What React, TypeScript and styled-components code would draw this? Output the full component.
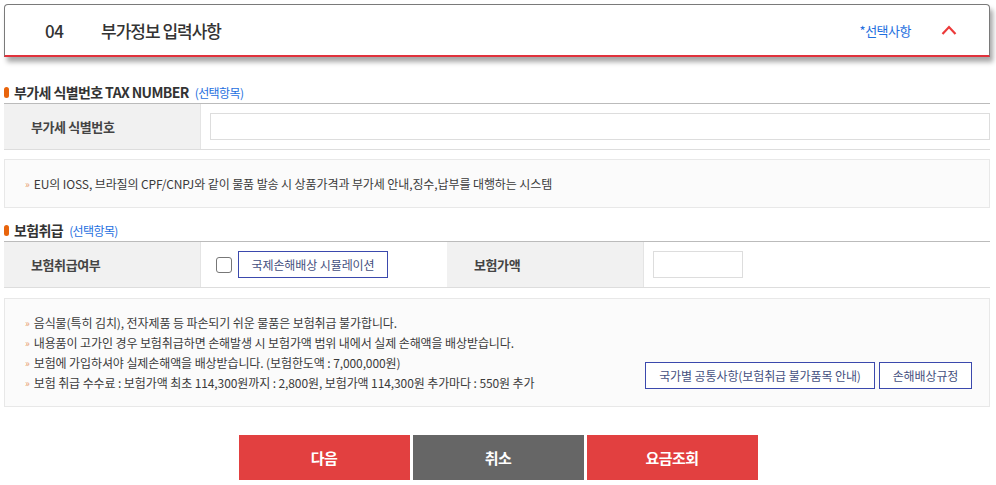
import { styled, createGlobalStyle } from "styled-components";

const GlobalStyle = createGlobalStyle`
  * { box-sizing: border-box; }
  body {
    margin: 0;
    background: #fff;
    font-family: "Noto Sans CJK KR", "Noto Sans", sans-serif;
    color: #333;
  }
`;

const Page = styled.div`
  width: 996px;
  padding: 4px 6px 0 4px;
`;

const Header = styled.div`
  height: 53px;
  display: flex;
  align-items: center;
  padding: 0 32px 0 40px;
  border: 1px solid #7a7a7a;
  border-bottom: 2px solid #e0323c;
  border-radius: 4px 4px 0 0;
  box-shadow: 3px 5px 5px rgba(0, 0, 0, 0.35);
  background: #fff;

  .num {
    width: 56px;
    font-size: 17px;
    font-weight: 500;
    letter-spacing: -0.5px;
  }
  .title {
    flex: 1;
    font-size: 17px;
    font-weight: 500;
    letter-spacing: -1px;
  }
  .opt {
    font-size: 13px;
    color: #1e6fe0;
    letter-spacing: -0.5px;
    margin-right: 30px;
  }
`;

const SectionTitle = styled.div<{ $top: number }>`
  display: flex;
  align-items: center;
  margin-top: ${({ $top }) => $top}px;
  height: 20px;
  font-size: 14px;
  font-weight: 700;
  letter-spacing: -0.6px;
  color: #333;

  &::before {
    content: "";
    width: 5px;
    height: 11px;
    border-radius: 3px;
    background: #e8640c;
    margin-right: 5px;
  }

  span {
    font-size: 12px;
    font-weight: 400;
    color: #1e6fe0;
    margin-left: 6px;
  }
`;

const Table = styled.div`
  margin-top: 1px;
  border-top: 1px solid #bbb;
  border-bottom: 1px solid #ddd;
  display: flex;
  height: 47px;
`;

const LabelCell = styled.div<{ $w: number }>`
  width: ${({ $w }) => $w}px;
  background: #f1f1f1;
  display: flex;
  align-items: center;
  padding-left: 27px;
  font-size: 13px;
  font-weight: 700;
  letter-spacing: -0.4px;
  color: #444;
  border-right: 1px solid #e4e4e4;
`;

const ValueCell = styled.div<{ $w?: number }>`
  ${({ $w }) => ($w ? `width: ${$w}px;` : "flex: 1;")}
  display: flex;
  align-items: center;
  padding-left: 9px;
`;

const TextInput = styled.input<{ $w?: number }>`
  height: 27px;
  ${({ $w }) => ($w ? `width: ${$w}px;` : "width: 100%;")}
  border: 1px solid #ddd;
  outline: none;
`;

const CheckBox = styled.span`
  width: 16px;
  height: 16px;
  border: 1px solid #777;
  border-radius: 3px;
  margin: 0 6px 0 6px;
`;

const OutlineButton = styled.button<{ $w: number }>`
  width: ${({ $w }) => $w}px;
  height: 27px;
  border: 1px solid #3b49ad;
  background: #fff;
  color: #45507e;
  font-family: inherit;
  font-size: 12px;
  letter-spacing: -0.1px;
  padding: 0;
  cursor: pointer;
`;

const InfoBox = styled.div<{ $top: number; $h: number }>`
  margin-top: ${({ $top }) => $top}px;
  height: ${({ $h }) => $h}px;
  border: 1px solid #e8e8e8;
  background: #fbfbfb;
  display: flex;
  align-items: center;
  padding: 0 17px 0 20px;
`;

const Notes = styled.ul`
  flex: 1;
  list-style: none;
  margin: 0;
  padding: 0;

  li {
    font-size: 12px;
    line-height: 20px;
    color: #3a3a3a;
    letter-spacing: -0.1px;
    display: flex;
  }
  li::before {
    content: "»";
    color: #e8a070;
    font-size: 10px;
    margin-right: 4px;
  }
`;

const LinkGroup = styled.div`
  display: flex;
  gap: 4px;
  align-self: flex-end;
  margin-bottom: 17px;
`;

const Actions = styled.div`
  display: flex;
  justify-content: center;
  gap: 3px;
  margin-top: 28px;
  margin-left: 2px;
`;

const ActionButton = styled.button<{ $gray?: boolean }>`
  width: 171px;
  height: 45px;
  border: none;
  background: ${({ $gray }) => ($gray ? "#666" : "#e24040")};
  color: #fff;
  font-family: inherit;
  font-size: 15px;
  font-weight: 700;
  letter-spacing: -0.5px;
  cursor: pointer;
`;

function ChevronUp() {
  return (
    <svg width="16" height="10" viewBox="0 0 16 10">
      <path d="M1.5 9 L8 2 L14.5 9" fill="none" stroke="#ec3a3a" strokeWidth="2.2" />
    </svg>
  );
}

function App() {
  return (
    <Page>
      <GlobalStyle />
      <Header>
        <div className="num">04</div>
        <div className="title">부가정보 입력사항</div>
        <div className="opt">*선택사항</div>
        <ChevronUp />
      </Header>

      <SectionTitle $top={25}>
        부가세 식별번호 TAX NUMBER <span>(선택항목)</span>
      </SectionTitle>
      <Table>
        <LabelCell $w={197}>부가세 식별번호</LabelCell>
        <ValueCell>
          <TextInput />
        </ValueCell>
      </Table>
      <InfoBox $top={9} $h={49}>
        <Notes>
          <li>EU의 IOSS, 브라질의 CPF/CNPJ와 같이 물품 발송 시 상품가격과 부가세 안내,징수,납부를 대행하는 시스템</li>
        </Notes>
      </InfoBox>

      <SectionTitle $top={12}>
        보험취급 <span>(선택항목)</span>
      </SectionTitle>
      <Table>
        <LabelCell $w={197}>보험취급여부</LabelCell>
        <ValueCell $w={246}>
          <CheckBox />
          <OutlineButton $w={150}>국제손해배상 시뮬레이션</OutlineButton>
        </ValueCell>
        <LabelCell $w={197}>보험가액</LabelCell>
        <ValueCell>
          <TextInput $w={90} />
        </ValueCell>
      </Table>
      <InfoBox $top={10} $h={109}>
        <Notes>
          <li>음식물(특히 김치), 전자제품 등 파손되기 쉬운 물품은 보험취급 불가합니다.</li>
          <li>내용품이 고가인 경우 보험취급하면 손해발생 시 보험가액 범위 내에서 실제 손해액을 배상받습니다.</li>
          <li>보험에 가입하셔야 실제손해액을 배상받습니다. (보험한도액 : 7,000,000원)</li>
          <li>보험 취급 수수료 : 보험가액 최초 114,300원까지 : 2,800원, 보험가액 114,300원 추가마다 : 550원 추가</li>
        </Notes>
        <LinkGroup>
          <OutlineButton $w={230}>국가별 공통사항(보험취급 불가품목 안내)</OutlineButton>
          <OutlineButton $w={93}>손해배상규정</OutlineButton>
        </LinkGroup>
      </InfoBox>

      <Actions>
        <ActionButton>다음</ActionButton>
        <ActionButton $gray>취소</ActionButton>
        <ActionButton>요금조회</ActionButton>
      </Actions>
    </Page>
  );
}

export default App;
